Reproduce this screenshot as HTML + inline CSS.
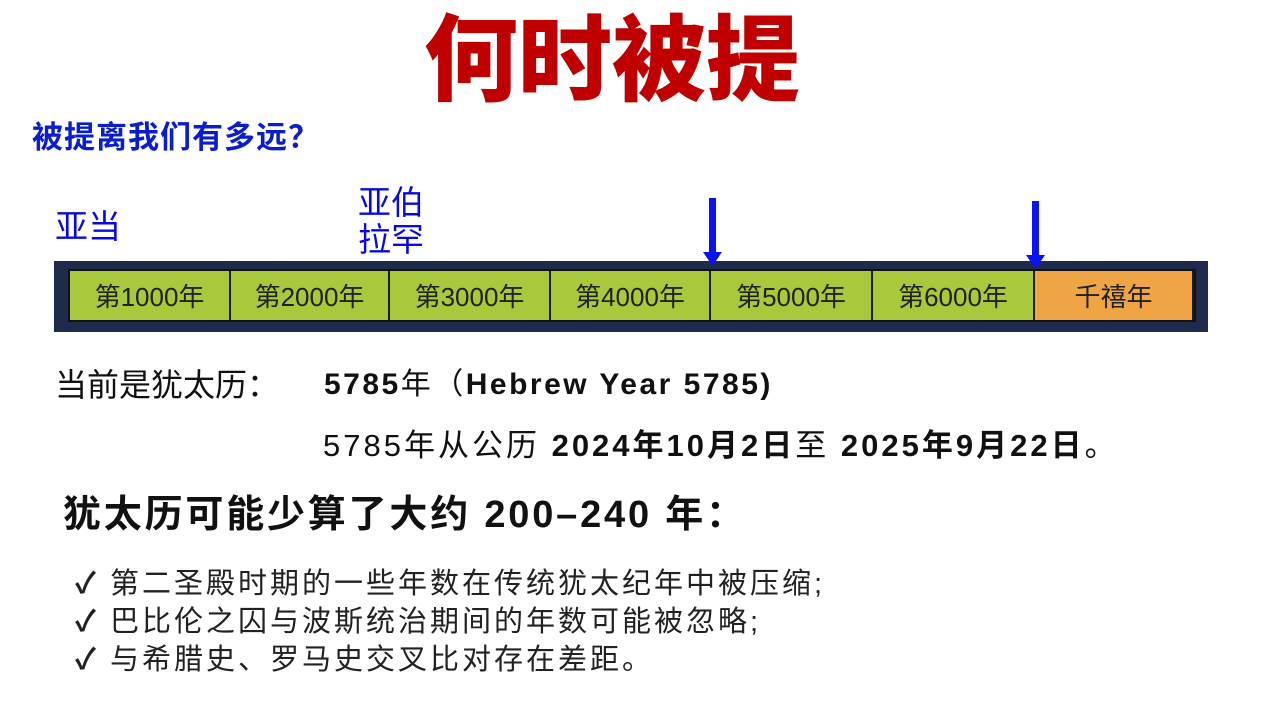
<!DOCTYPE html>
<html><head><meta charset="utf-8"><style>
body{margin:0;width:1280px;height:720px;background:#fff;position:relative;overflow:hidden;font-family:"Liberation Sans","Noto Sans CJK SC",sans-serif}
.a{position:absolute;white-space:nowrap;line-height:1}
.cell{position:absolute;top:271px;height:49px;background:#a9c93c;border-right:2px solid #1a1f1a;box-sizing:border-box;font:26px "Liberation Sans","Noto Sans CJK SC",sans-serif;color:#222;display:flex;align-items:center;justify-content:center}
</style></head><body>
<div class="a" style="left:424px;top:14px;font-size:94px;font-weight:900;color:#c00000;letter-spacing:0px">何时被提</div>
<div class="a" style="left:32px;top:119px;font-size:31px;font-weight:bold;color:#0a1ed0;letter-spacing:1px">被提离我们有多远<span style="font-family:'Noto Sans CJK SC',sans-serif">？</span></div>
<div class="a" style="left:55px;top:210px;font-size:33px;color:#0a0ae0">亚当</div>
<div class="a" style="left:358px;top:184px;font-size:33px;color:#0a0ae0;line-height:37px">亚伯<br>拉罕</div>
<div style="position:absolute;left:54px;top:261px;width:1154px;height:71px;background:#1e2b4c"></div>
<div style="position:absolute;left:68px;top:269px;width:1128px;height:53px;background:#111"></div>
<div class="cell" style="left:70px;width:161px">第1000年</div>
<div class="cell" style="left:231px;width:159px">第2000年</div>
<div class="cell" style="left:390px;width:161px">第3000年</div>
<div class="cell" style="left:551px;width:160px">第4000年</div>
<div class="cell" style="left:711px;width:162px">第5000年</div>
<div class="cell" style="left:873px;width:162px">第6000年</div>
<div class="cell" style="left:1035px;width:159px;background:#f0a544">千禧年</div>
<svg style="position:absolute;left:0;top:0" width="1280" height="720">
<rect x="709" y="198" width="7" height="55" fill="#0a14f0"/><polygon points="703,252 722,252 712.5,266" fill="#0a14f0"/>
<rect x="1032" y="201" width="7" height="55" fill="#0a14f0"/><polygon points="1026,255 1045,255 1035.5,269" fill="#0a14f0"/>
</svg>
<div class="a" style="left:55px;top:369px;font-size:32px;color:#111">当前是犹太历：</div>
<div class="a" style="left:324px;top:370px;font-size:30px;font-weight:bold;color:#111;letter-spacing:2.5px">5785<span style="font-weight:normal">年（</span>Hebrew Year 5785)</div>
<div class="a" style="left:323px;top:430px;font-size:31px;color:#111;letter-spacing:3px">5785年从公历 <b>2024年10月2日</b>至 <b>2025年9月22日</b>。</div>
<div class="a" style="left:63px;top:496px;font-size:38px;font-weight:bold;color:#111;letter-spacing:2.8px">犹太历可能少算了大约 200–240 年：</div>
<div class="a" style="left:75px;top:565px;font-size:29px;color:#222;line-height:38px;letter-spacing:3px"><b>✓</b> 第二圣殿时期的一些年数在传统犹太纪年中被压缩;<br><b>✓</b> 巴比伦之囚与波斯统治期间的年数可能被忽略;<br><b>✓</b> 与希腊史、罗马史交叉比对存在差距。</div>
</body></html>
